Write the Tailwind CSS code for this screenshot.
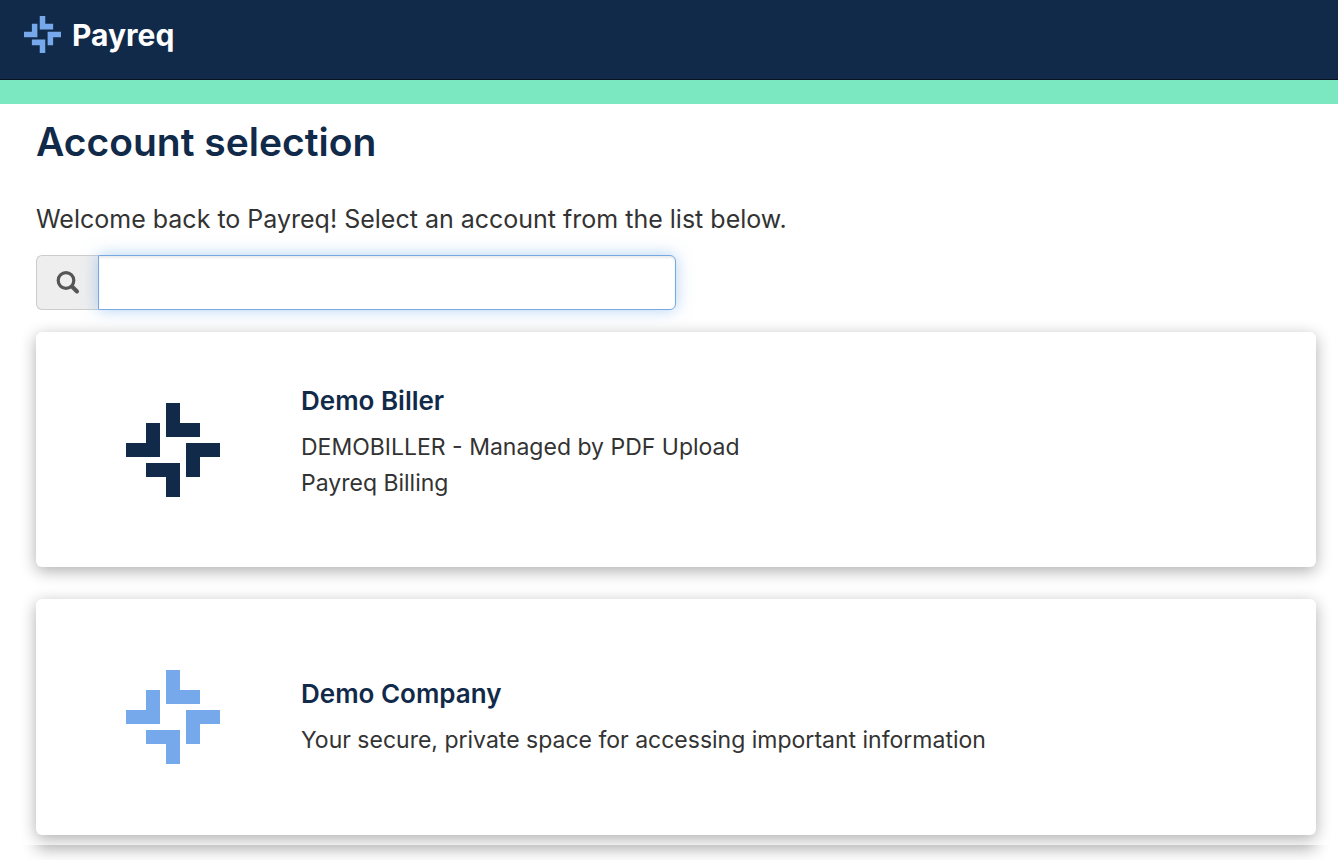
<!DOCTYPE html>
<html lang="en">
<head>
<meta charset="UTF-8" />
<meta name="viewport" content="width=device-width, initial-scale=1.0" />
<title>Account selection - Payreq</title>
<script src="https://cdn.jsdelivr.net/npm/@tailwindcss/browser@4"></script>
</head>
<body class="bg-white text-[#333] font-['Inter',sans-serif] overflow-x-hidden">

<!-- Navbar -->
<header class="bg-[#112a49] h-20 border-b border-[#08131f] px-6 pt-4">
    <a href="#" class="inline-flex items-center gap-[11px] text-white">
    <svg class="size-[37px]" viewBox="0 0 94 94" fill="#76a9ec" aria-hidden="true">
        <path d="M40 0h14v20h20v14H40zM20 20h14v34H0V40h20zM60 40h34v14H74v20H60zM20 60h34v34H40V74H20z" />
    </svg>
    <span class="text-[30px] leading-9 font-bold">Payreq</span>
    </a>
</header>
<div class="bg-[#7be8c2] h-6"></div>

<main class="pl-9 pr-[22px]">
    <h1 class="pt-[14px] text-[39px] leading-12 font-semibold text-[#112a49]">Account selection</h1>
    <p class="mt-[34px] text-[25px] leading-[38px]">Welcome back to Payreq! Select an account from the list below.</p>

    <!-- Search -->
    <form class="mt-[17px] flex h-[55px] w-[640px] max-w-full">
    <label for="search" class="w-[62px] shrink-0 flex items-center justify-center rounded-l-md border border-r-0 border-[#ccc] bg-[#eee]">
        <svg class="size-6" viewBox="0 0 24 24" fill="none" stroke="#555" role="img" aria-label="Search accounts">
        <circle cx="10" cy="9.5" r="7.8" stroke-width="3.2" />
        <path d="M16 15.5l5 5" stroke-width="4" stroke-linecap="round" />
        </svg>
    </label>
    <input id="search" type="text" class="min-w-0 flex-1 rounded-r-md border border-[#76a9e0] bg-white px-4 text-2xl outline-none shadow-[inset_0_2px_2px_rgba(0,0,0,0.075),0_0_16px_rgba(102,163,233,0.5)]" />
    </form>

    <!-- Accounts -->
    <div class="mt-[22px] space-y-8">
    <a href="#" class="flex items-center min-h-[235px] rounded-md bg-white pl-[90px] pr-8 shadow-[0_4px_16px_rgba(0,0,0,0.32)]">
        <svg class="size-[94px] shrink-0" viewBox="0 0 94 94" fill="#112a49" aria-hidden="true">
        <path d="M40 0h14v20h20v14H40zM20 20h14v34H0V40h20zM60 40h34v14H74v20H60zM20 60h34v34H40V74H20z" />
        </svg>
        <div class="ml-[81px] pb-4">
        <h2 class="mb-[10px] text-[26px] leading-9 font-semibold text-[#112a49]">Demo Biller</h2>
        <p class="text-[23px] leading-9">DEMOBILLER - Managed by PDF Upload</p>
        <p class="text-[23px] leading-9">Payreq Billing</p>
        </div>
    </a>
    <a href="#" class="flex items-center min-h-[236px] rounded-md bg-white pl-[90px] pr-8 shadow-[0_4px_16px_rgba(0,0,0,0.32)]">
        <svg class="size-[94px] shrink-0" viewBox="0 0 94 94" fill="#76a9ec" aria-hidden="true">
        <path d="M40 0h14v20h20v14H40zM20 20h14v34H0V40h20zM60 40h34v14H74v20H60zM20 60h34v34H40V74H20z" />
        </svg>
        <div class="ml-[81px]">
        <h2 class="mb-[10px] text-[26px] leading-9 font-semibold text-[#112a49]">Demo Company</h2>
        <p class="text-[23px] leading-9">Your secure, private space for accessing important information</p>
        </div>
    </a>
    </div>
</main>

<!-- Lower edge of the list -->
<div class="relative mt-[10px] h-[15px] overflow-hidden bg-white pl-9 pr-[22px]">
    <div class="-mt-10 h-10 rounded-md shadow-[0_4px_16px_rgba(0,0,0,0.32)]"></div>
</div>

</body>
</html>
